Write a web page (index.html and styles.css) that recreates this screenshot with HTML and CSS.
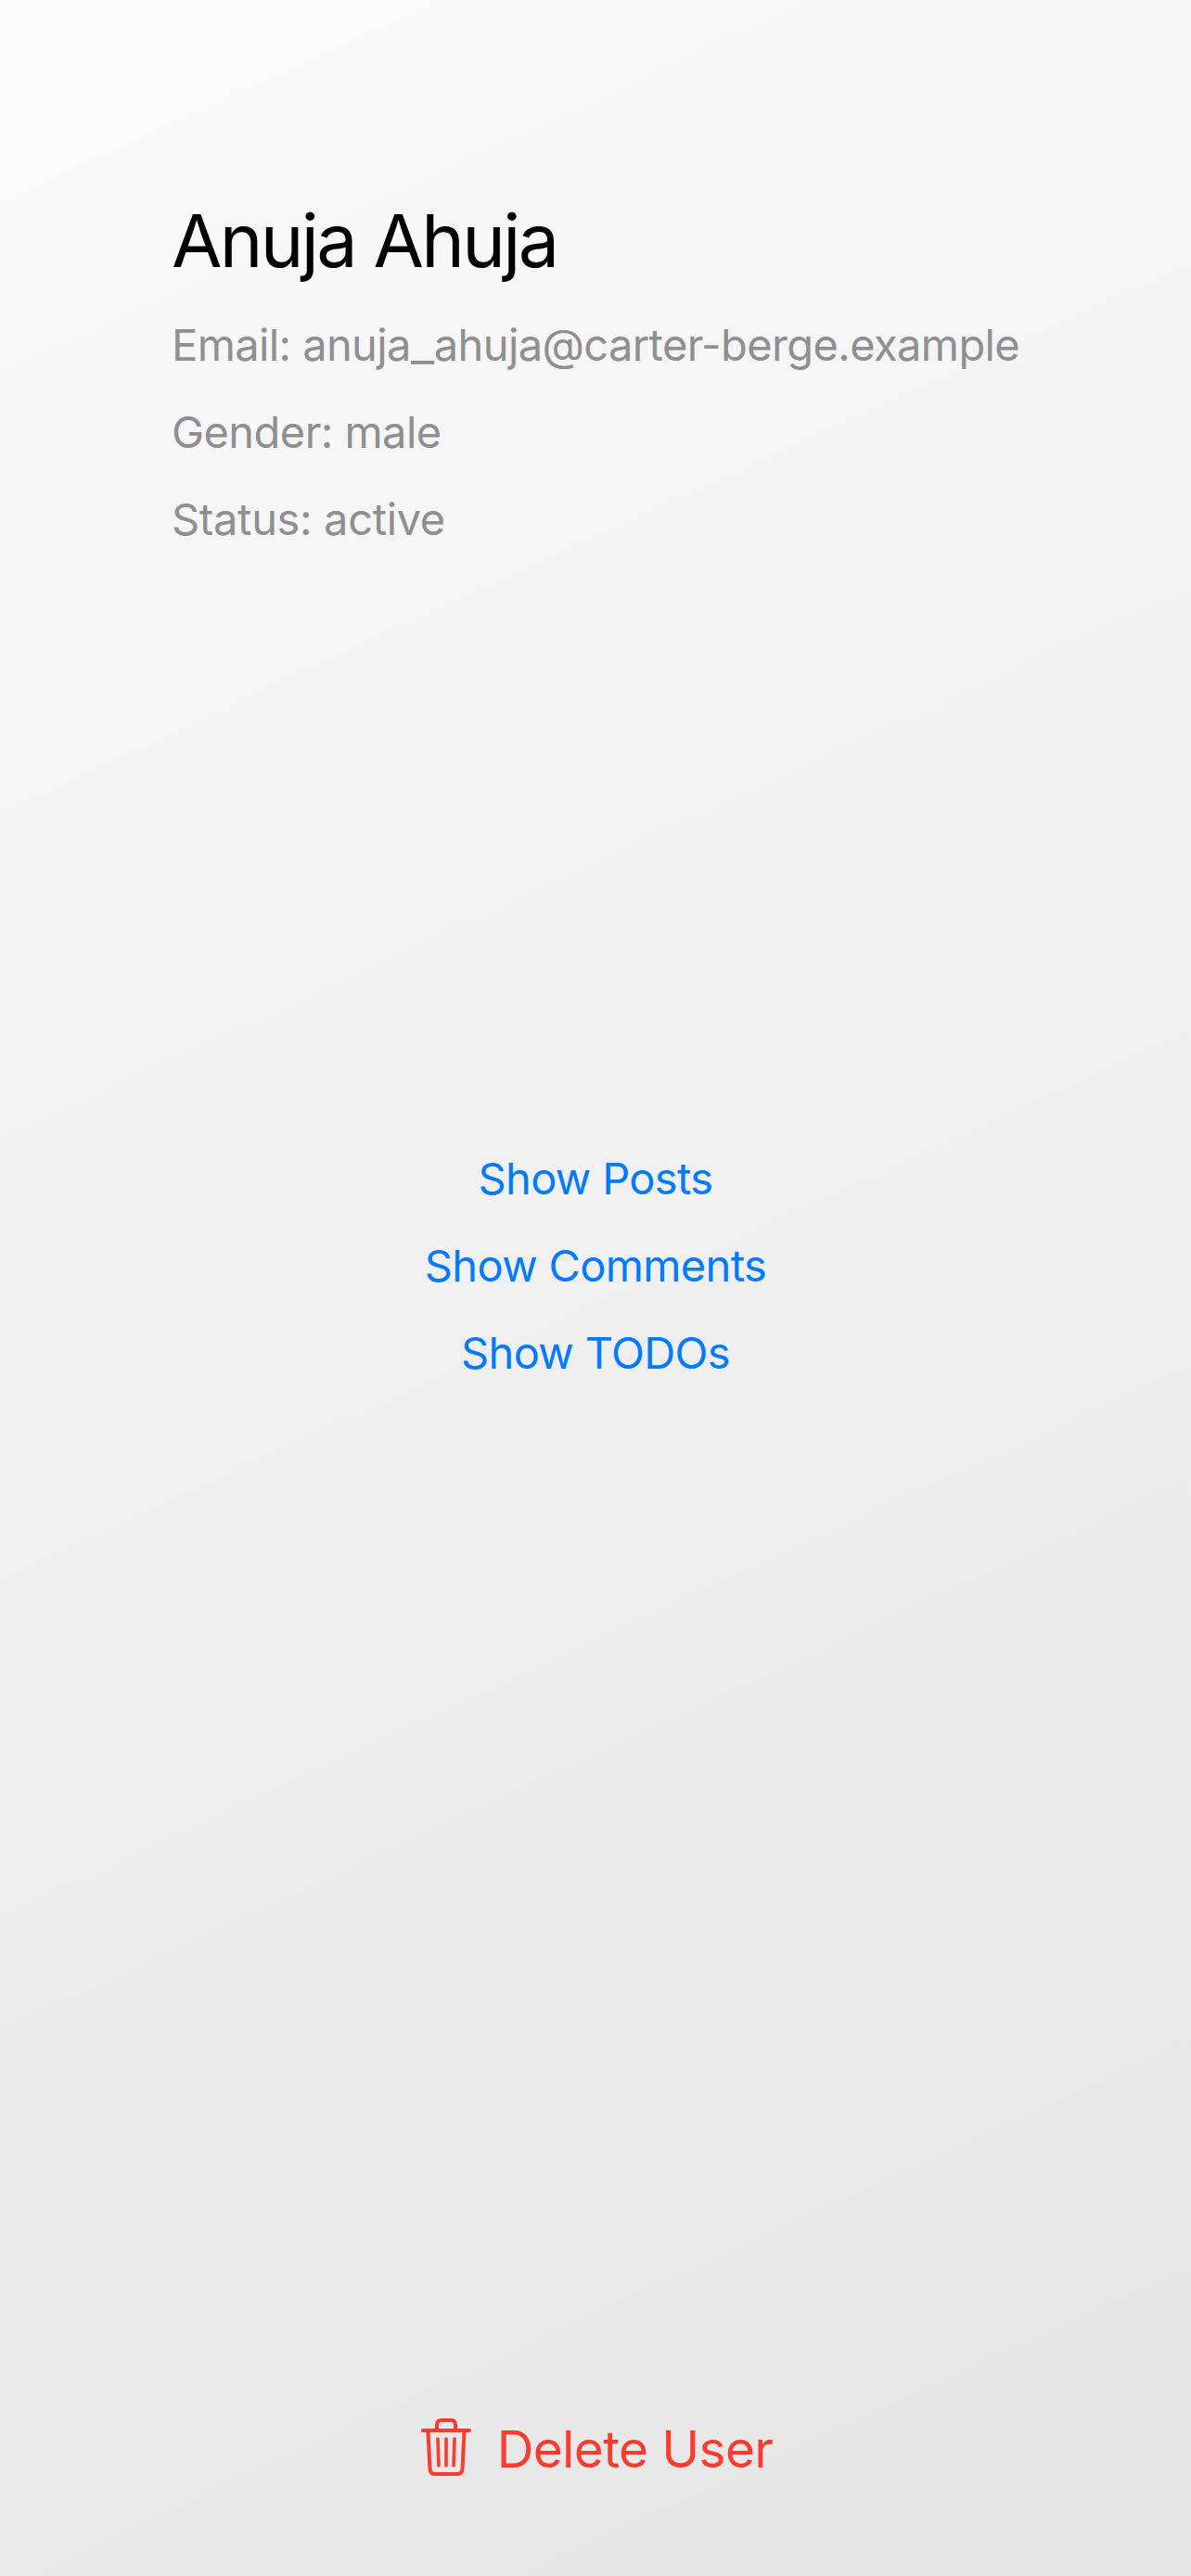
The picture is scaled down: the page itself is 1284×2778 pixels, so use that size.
FILE: index.html
```html
<!DOCTYPE html>
<html lang="en">
<head>
<meta charset="utf-8">
<title>Anuja Ahuja</title>
<link rel="stylesheet" href="styles.css">
</head>
<body>
<main class="screen">
  <header class="profile">
    <h1 class="name">Anuja Ahuja</h1>
    <p class="detail email">Email: anuja<span class="underscore">_</span>ahuja@carter-berge.example</p>
    <p class="detail gender">Gender: male</p>
    <p class="detail status">Status: active</p>
  </header>
  <nav class="links">
    <a class="link posts">Show Posts</a>
    <a class="link comments">Show Comments</a>
    <a class="link todos">Show TODOs</a>
  </nav>
  <button class="delete">
    <svg class="trash" viewBox="0 0 54 62" fill="none" stroke="currentColor" stroke-width="4" stroke-linecap="round" stroke-linejoin="round">
      <path d="M2 13H52M17 12V7Q17 2 22 2H32Q37 2 37 7V12M7.500 14L9.500 55Q10 60 15 60H39Q44 60 44.500 55L46.500 14"/>
      <path d="M18 22L19 51M27 22V51M36 22L35 51" stroke-width="3.600"/>
    </svg>
    <span class="delete-label">Delete User</span>
  </button>
</main>
</body>
</html>
```
FILE: styles.css
```css
* { box-sizing: border-box; }
body { margin: 0; font-family: Inter, sans-serif; }
.screen {
  height: 2778px;
  display: flex;
  flex-direction: column;
  align-items: center;
  background: linear-gradient(155.2deg, #fbfbfb, #f8f8f8 10%, #efefef 52%, #e5e5e5);
}
.profile { width: 912px; padding-top: 211px; }
.name { margin: 0 0 18px -1px; font-size: 79px; line-height: 96px; font-weight: 400; letter-spacing: -2.7px; white-space: nowrap; }
.detail { margin: 0 0 0 -1px; font-size: 47px; line-height: 94px; color: #8e8e93; white-space: nowrap; }
.email { letter-spacing: -0.6px; }
.gender { letter-spacing: -0.55px; }
.status { letter-spacing: -0.35px; }
.underscore { display: inline-block; line-height: 1; transform: scaleX(1.18); margin: 0 2px; }
.links { display: flex; flex-direction: column; align-items: center; margin-top: 617px; }
.link { font-size: 47px; line-height: 94px; letter-spacing: -0.65px; color: #007aff; white-space: nowrap; }
.delete {
  display: flex; align-items: center; gap: 28px;
  margin: auto 0 101px; padding: 0 0 0 3px; border: 0; background: none;
  font: 400 55px/72px Inter, sans-serif; color: #ff3b30; letter-spacing: -0.65px;
}
.trash { width: 54px; height: 62px; margin-bottom: 4px; }
```
